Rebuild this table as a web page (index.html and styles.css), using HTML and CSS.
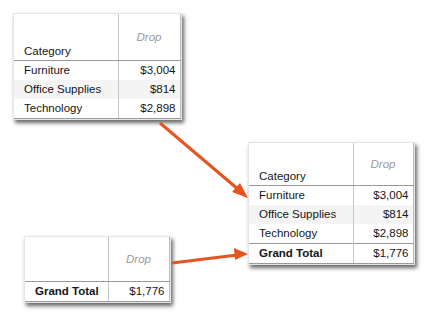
FILE: index.html
```html
<!DOCTYPE html>
<html>
<head>
<meta charset="utf-8">
<link rel="stylesheet" href="styles.css">
</head>
<body>
<div class="canvas">
  <div class="card card-a">
    <table class="pt">
      <colgroup><col class="c1"><col class="c2"></colgroup>
      <tr class="head"><td class="cat">Category</td><td class="meas">Drop</td></tr>
      <tr><td>Furniture</td><td class="num">$3,004</td></tr>
      <tr class="band"><td>Office Supplies</td><td class="num">$814</td></tr>
      <tr class="last"><td>Technology</td><td class="num">$2,898</td></tr>
    </table>
  </div>

  <div class="card card-b">
    <table class="pt">
      <colgroup><col class="c1"><col class="c2"></colgroup>
      <tr class="head"><td class="cat">Category</td><td class="meas">Drop</td></tr>
      <tr><td>Furniture</td><td class="num">$3,004</td></tr>
      <tr class="band"><td>Office Supplies</td><td class="num">$814</td></tr>
      <tr><td>Technology</td><td class="num">$2,898</td></tr>
      <tr class="total last"><td>Grand Total</td><td class="num">$1,776</td></tr>
    </table>
  </div>

  <div class="card card-c">
    <table class="pt">
      <colgroup><col class="c1"><col class="c2"></colgroup>
      <tr class="head"><td class="cat"></td><td class="meas">Drop</td></tr>
      <tr class="total-only last"><td>Grand Total</td><td class="num">$1,776</td></tr>
    </table>
  </div>

  <svg class="arrows" width="437" height="325" viewBox="0 0 437 325">
    <g stroke="#e5531f" stroke-width="3" fill="none" stroke-linecap="butt">
      <line x1="160" y1="123" x2="239" y2="190"/>
      <line x1="172" y1="263" x2="237" y2="255"/>
    </g>
    <g fill="#e5531f">
      <polygon points="248,198 232,192 240,183"/>
      <polygon points="248,254 235,260 234,248"/>
    </g>
  </svg>
</div>
</body>
</html>
```

FILE: styles.css
```css
html, body {
  margin: 0;
  padding: 0;
  background: #ffffff;
}

.canvas {
  position: relative;
  width: 437px;
  height: 325px;
  overflow: hidden;
  font-family: "Liberation Sans", Arial, sans-serif;
  font-size: 11.5px;
  color: #161616;
}

.card {
  position: absolute;
  background: #ffffff;
  border: 1px solid #e6e6e6;
  box-shadow: 2px 3px 4px rgba(0, 0, 0, 0.6);
}

.card-a { left: 13px; top: 13px; }
.card-b { left: 248px; top: 142px; }
.card-c { left: 24px; top: 236px; }

.pt {
  border-collapse: collapse;
  table-layout: fixed;
}

.pt td {
  padding: 0 4px 0 10px;
  height: 19px;
  line-height: 19px;
  white-space: nowrap;
  border-right: 1px solid #c6c6c6;
}

.pt td + td {
  border-right: 1px solid #bdbdbd;
}

.pt .num {
  text-align: right;
  padding-right: 4px;
}

.card-a .c1 { width: 104px; }
.card-a .c2 { width: 62px; }
.card-b .c1 { width: 104px; }
.card-b .c2 { width: 60px; }
.card-c .c1 { width: 83px; }
.card-c .c2 { width: 61px; }

.pt .head td {
  height: 44px;
  border-bottom: 1px solid #9a9a9a;
}

.card-b .pt .head td { height: 40px; }
.card-c .pt .head td { height: 42px; }

.pt .head .cat {
  vertical-align: bottom;
  line-height: 14px;
  padding-bottom: 2px;
}

.pt .head .meas {
  vertical-align: middle;
  text-align: center;
  font-style: italic;
  color: #9a9a9a;
  padding: 0;
}

.pt .band td {
  background: #f4f4f4;
}

.pt .last td {
  border-bottom: 1px solid #9a9a9a;
}

.pt .total td {
  border-top: 1px solid #9a9a9a;
  background: #ffffff;
  font-weight: bold;
}

.pt .total td.num {
  font-weight: normal;
}

.pt .total-only td:first-child {
  font-weight: bold;
}

.arrows {
  position: absolute;
  left: 0;
  top: 0;
}
```
